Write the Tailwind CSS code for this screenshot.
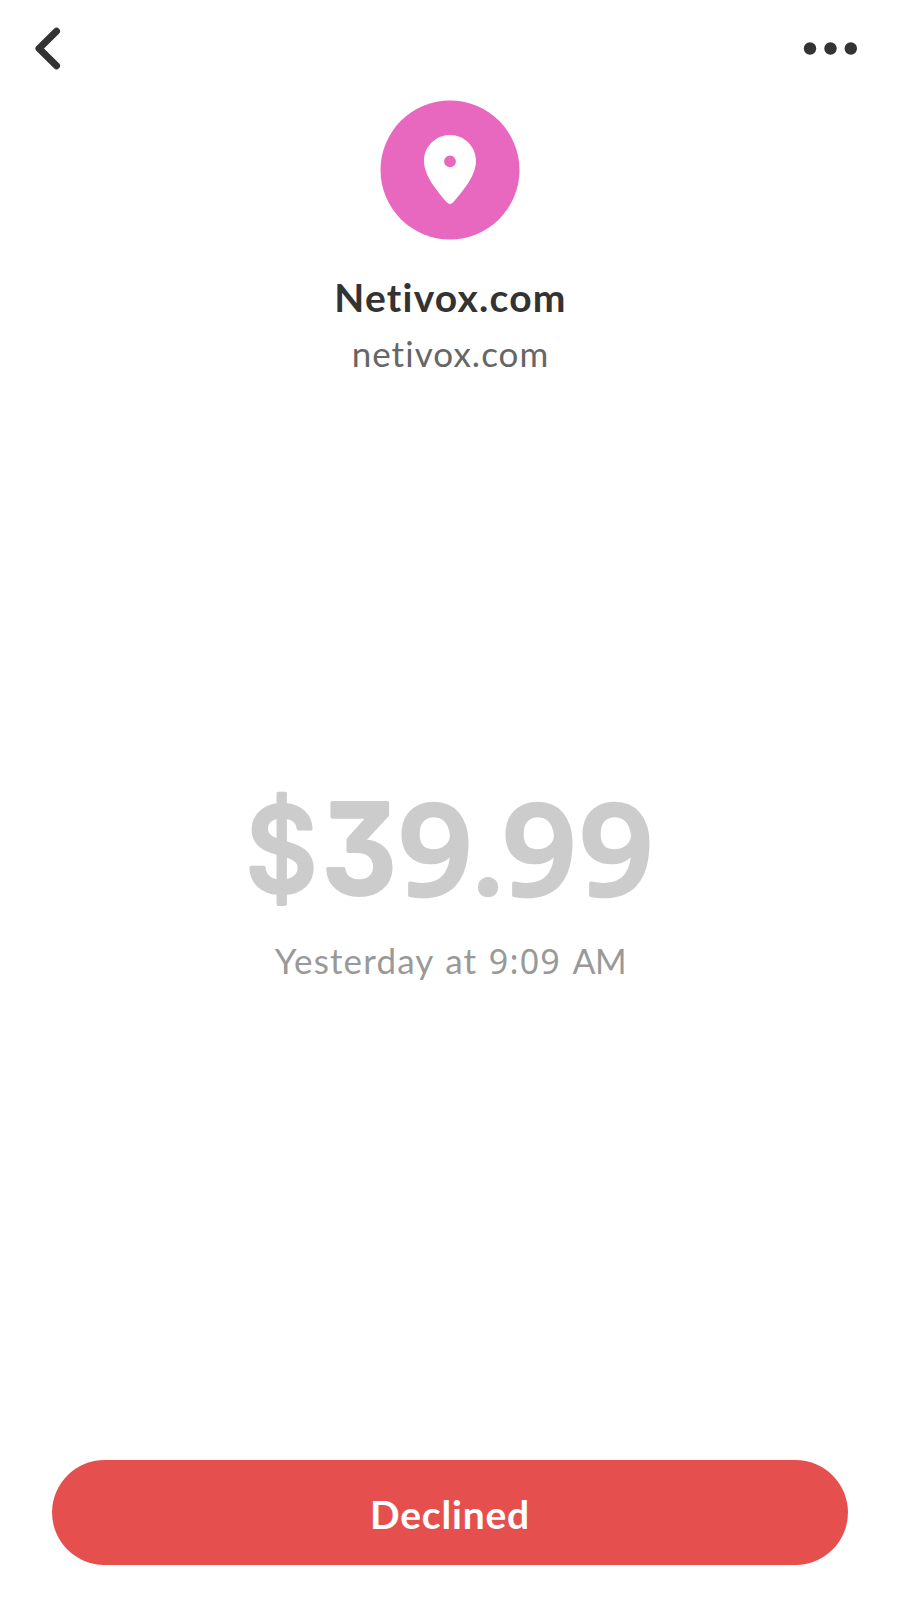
<!DOCTYPE html>
<html lang="en">
<head>
<meta charset="utf-8">
<title>Netivox.com payment</title>
<script src="https://cdn.jsdelivr.net/npm/@tailwindcss/browser@4"></script>
</head>
<body class="bg-white">
<main class="flex h-[1610px] w-[900px] flex-col items-center overflow-hidden bg-white font-['Lato',sans-serif]">
  <header class="flex h-[100px] w-full shrink-0 items-start justify-between pt-6 pr-[40px] pl-[32px]">
    <button aria-label="Back"><svg class="block h-12 w-9" viewBox="0 0 36 48" fill="none" stroke="#333" stroke-width="7" stroke-linecap="round" stroke-linejoin="round"><path d="M24.500 7.300 7 24.500 24.500 41.700"/></svg></button>
    <button aria-label="More"><svg class="block h-12 w-[60px]" viewBox="0 0 60 48" fill="#333"><circle cx="10" cy="24.500" r="6.200"/><circle cx="30.500" cy="24.500" r="6.200"/><circle cx="50.800" cy="24.500" r="6.200"/></svg></button>
  </header>
  <svg class="h-[140px] w-[140px] shrink-0" viewBox="0 0 140 140"><circle cx="70" cy="70" r="69.500" fill="#e868bf"/><path fill="#fff" fill-rule="evenodd" d="M70 35C55.500 35 44 46.500 44 61C44 76 58 92 66.500 102Q70 106 73.500 102C82 92 96 76 96 61C96 46.500 84.500 35 70 35ZM70 55.500A5.900 5.900 0 1 1 70 67.300A5.900 5.900 0 1 1 70 55.500Z"/></svg>
  <h1 class="mt-[33px] pl-px text-[39px] leading-[48px] font-bold tracking-[1.200px] whitespace-nowrap text-[#333]">Netivox.com</h1>
  <p class="mt-[10px] pl-px text-[35px] leading-[44px] tracking-[1.050px] whitespace-nowrap text-[#666]">netivox.com</p>
  <svg class="mt-[363px] h-[200px] w-[440px] shrink-0" viewBox="-10 -30 440 200" fill="#ccc" stroke="#ccc" stroke-linejoin="round" role="img" aria-label="$39.99">
    <text class="font-['Inter',sans-serif] text-[118px] font-medium" stroke-width="4" transform="translate(5.500 123.500) scale(.945 1)">$</text>
    <text class="font-['Inter',sans-serif] text-[125px] font-semibold [font-feature-settings:'cv09']" stroke-width="4" transform="translate(82 126) scale(.935 1)">3</text>
    <text class="font-['Noto_Sans',sans-serif] text-[126px] font-medium" stroke-width="4.500" transform="translate(158 126.500) scale(1.030 1)">9</text>
    <text class="font-['Lato',sans-serif] text-[131px] font-bold" stroke-width="0.500" x="232.500" y="128">.</text>
    <text class="font-['Noto_Sans',sans-serif] text-[126px] font-medium" stroke-width="4.500" transform="translate(262 126.500) scale(1.030 1)" x="0 74.760">99</text>
  </svg>
  <p class="pl-px text-[35px] leading-[44px] tracking-[1.150px] [word-spacing:1.500px] whitespace-nowrap text-[#999]">Yesterday at <span class="font-['Noto_Sans',sans-serif] text-[34px] leading-none">9:09</span> <span class="text-[34px] tracking-[-0.500px]">AM</span></p>
  <button class="mt-auto mb-[45px] h-[105px] w-[796px] shrink-0 rounded-full bg-[#e5504f] pt-[3px] text-[39px] leading-[48px] font-bold tracking-[0.800px] text-white">Declined</button>
</main>
</body>
</html>
